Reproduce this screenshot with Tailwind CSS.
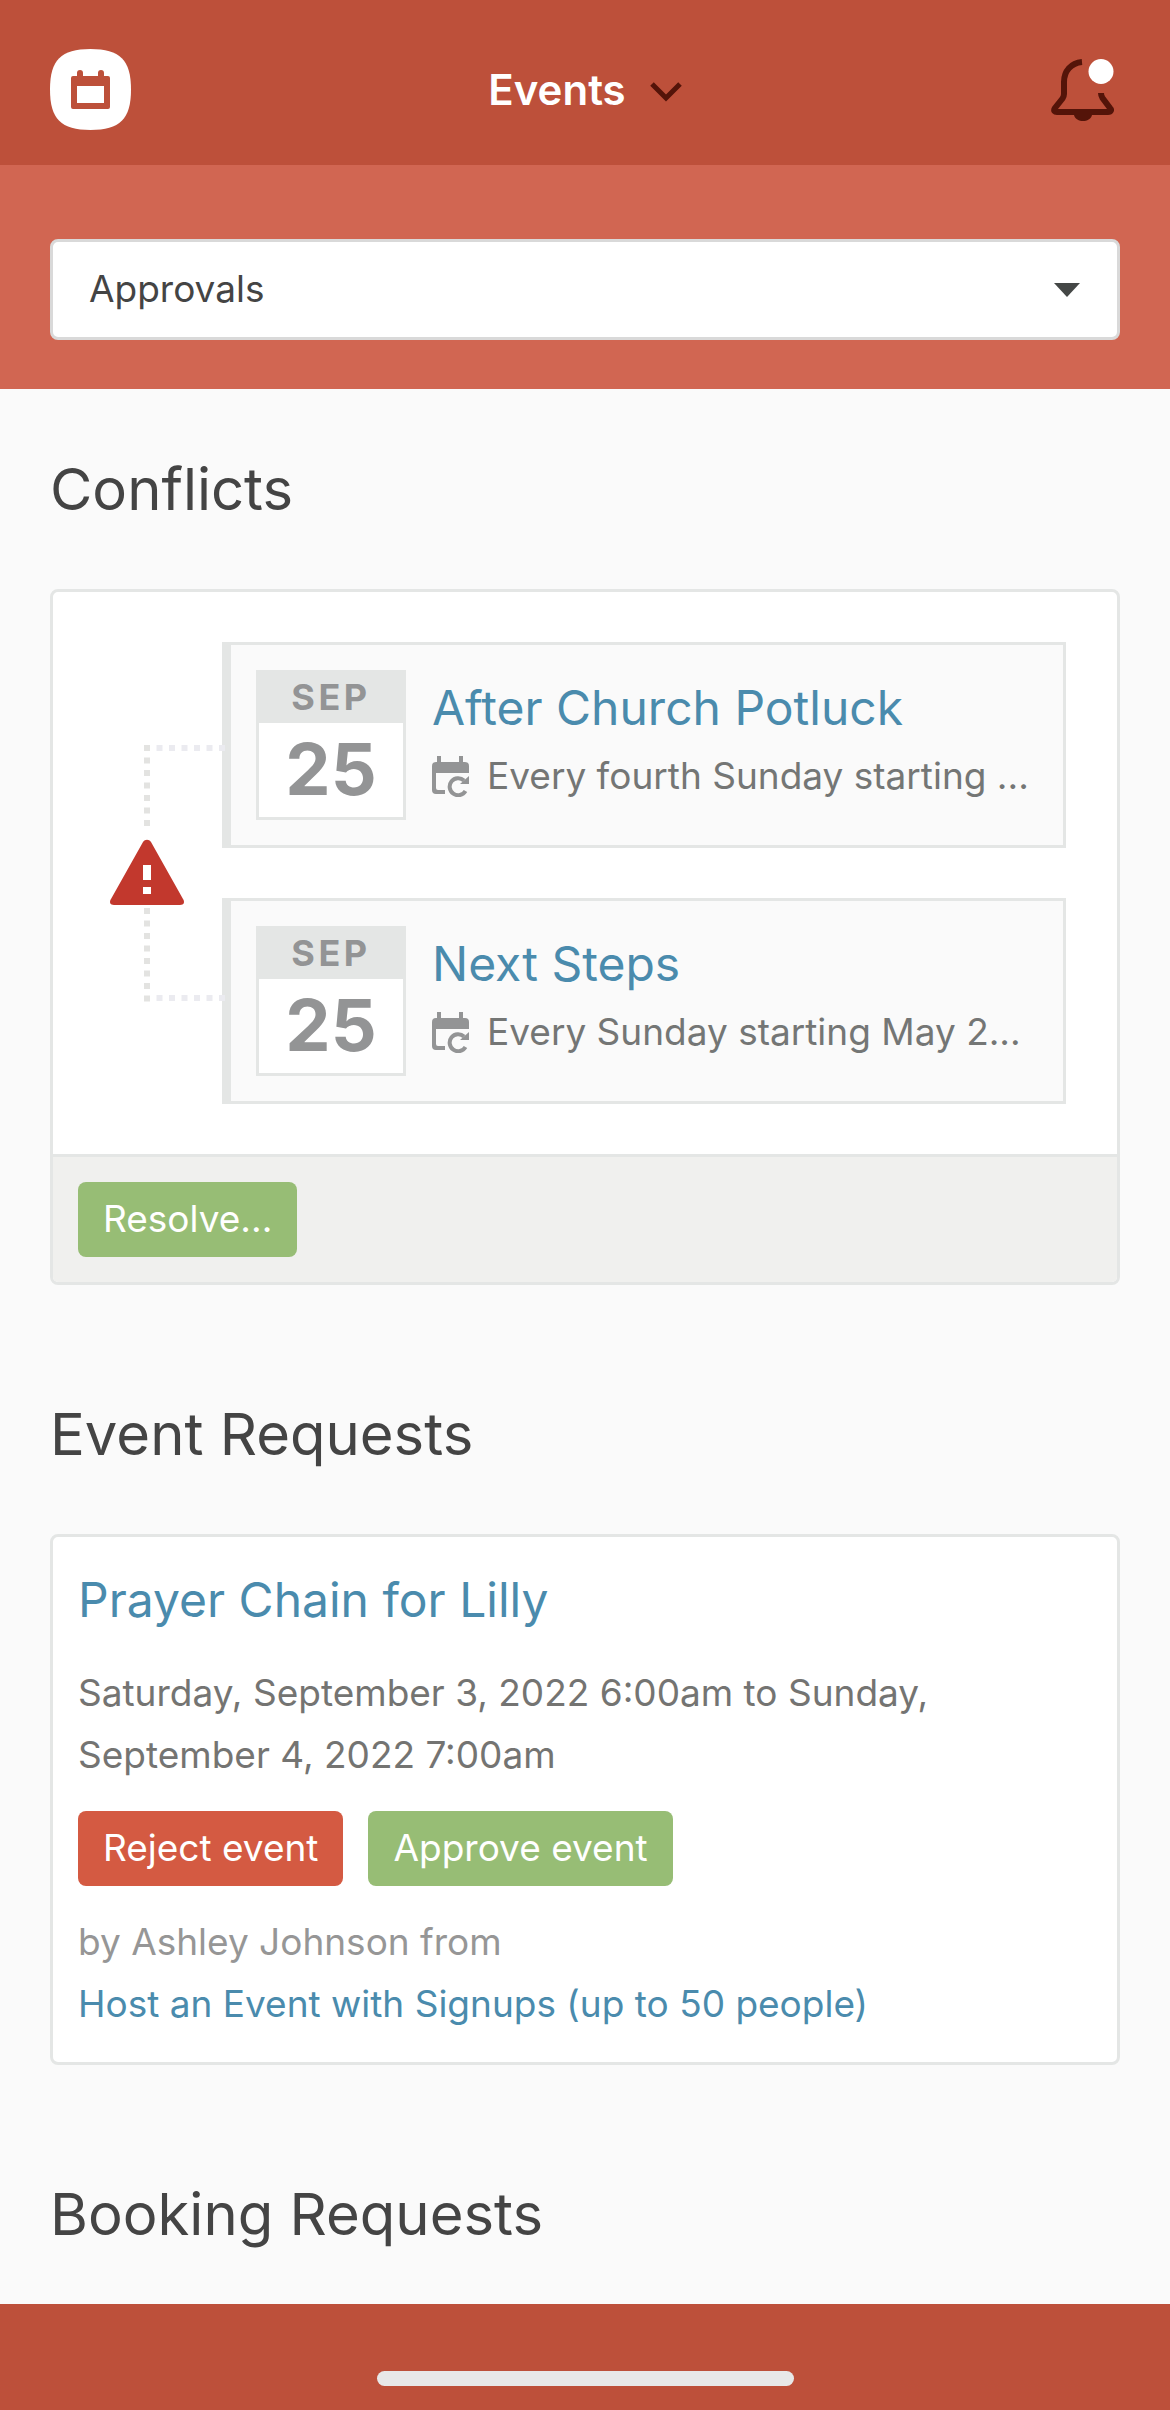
<!DOCTYPE html>
<html lang="en">
<head>
    <meta charset="UTF-8">
    <meta name="viewport" content="width=device-width, initial-scale=1.0">
    <title>Events - Approvals</title>
    <script src="https://cdn.jsdelivr.net/npm/@tailwindcss/browser@4"></script>
</head>
<body class="flex min-h-screen flex-col bg-[#fafafa] font-['Inter','Liberation_Sans',sans-serif] text-[37px] text-[#444]">
    <header class="grid h-[165px] grid-cols-[1fr_auto_1fr] items-center bg-[#bd503a] px-[50px] pt-[14px]">
        <a href="#" aria-label="Home" class="justify-self-start">
            <svg class="size-[81px]" viewBox="0 0 81 81">
                <path fill="#fff" d="M40.500 0C70 0 81 11 81 40.500S70 81 40.500 81 0 70 0 40.500 11 0 40.500 0z"/>
                <path fill="#bd503a" fill-rule="evenodd" d="M27 24a3 3 0 0 1 6 0v3h15v-3a3 3 0 0 1 6 0v3h4a2 2 0 0 1 2 2v29a2 2 0 0 1-2 2H23a2 2 0 0 1-2-2V29a2 2 0 0 1 2-2h4zM27 37v17h27V37z"/>
            </svg>
        </a>
        <button class="flex items-center gap-6 text-[42px] leading-none font-semibold text-white">
            Events
            <svg class="mt-1 h-5 w-8" viewBox="0 0 32 20" fill="none" stroke="#541409" stroke-width="5">
                <path d="M2 2l14 14L30 2"/>
            </svg>
        </button>
        <button aria-label="Notifications" class="justify-self-end pr-[6px]">
            <svg class="h-[62px] w-[63px]" viewBox="0 0 63 62">
                <path fill="none" stroke="#541409" stroke-width="6" d="M31 3C20 4 13 12 13 23v12c0 2-.500 3-1.500 4.500L4 49c-2 3 0 4 2 4h51c3 0 4-2 2-4l-7.500-10c-1-1.500-1.500-3-1.500-5"/>
                <path fill="#541409" d="M23 56h18c-1 4-5 6-9 6s-8-2-9-6z"/>
                <circle cx="50" cy="12.500" r="12.500" fill="#fff"/>
            </svg>
        </button>
    </header>

    <div class="bg-[#d16652] px-[50px] pt-[74px] pb-[49px]">
        <div class="relative">
            <select aria-label="View" class="block h-[101px] w-full appearance-none rounded-lg border-3 border-[#d9d9d9] bg-white px-9 pb-[2px] text-[#444]">
                <option>Approvals</option>
            </select>
            <svg class="pointer-events-none absolute top-11 right-10 h-[14px] w-[26px]" viewBox="0 0 26 14" fill="#444746">
                <path d="M0 0h26L13 14z"/>
            </svg>
        </div>
    </div>

    <main class="flex flex-1 flex-col gap-[113px] px-[50px] pt-16">
        <section>
            <h2 class="mb-16 text-[58px] leading-[72px]">Conflicts</h2>
            <div class="overflow-hidden rounded-lg border-3 border-[#e4e6e5] bg-white">
                <div class="flex items-center py-[50px] pr-[51px] pl-[57px]">
                    <!-- Connector between the conflicting events -->
                    <svg class="relative z-10 h-[257px] w-28 shrink-0 overflow-visible" viewBox="0 0 112 257">
                        <g fill="none" stroke-width="6">
                            <path stroke="#e3e3e1" stroke-dasharray="6 6.500" d="M37 0v82M37 163v94"/>
                            <path stroke="#ebebf0" stroke-dasharray="6 6.500" d="M46.500 3H116M46.500 253H116"/>
                        </g>
                        <path fill="#c2382d" d="M33 97c2-3 6-3 8 0l32 57c2 3 1 6-3 6H4c-4 0-5-3-3-6z"/>
                        <path fill="#fff" d="M33 120h8v15h-8zM33 142h8v7h-8z"/>
                    </svg>
                    <div class="flex min-w-0 flex-1 flex-col gap-[50px]">
                        <article class="flex gap-[26px] border-3 border-l-9 border-[#e4e6e5] bg-[#fafafa] p-[25px]">
                            <div class="size-[150px] shrink-0 border-3 border-[#e4e6e5] bg-white text-center font-bold text-[#939495]">
                                <div class="bg-[#e4e6e5] pb-[2px] text-4xl leading-[48px] tracking-widest">SEP</div>
                                <div class="text-7xl leading-[92px]">25</div>
                            </div>
                            <div class="min-w-0 flex-1">
                                <h3 class="truncate text-5xl leading-[76px]"><a href="#" class="text-[#4a8bad]">After Church Potluck</a></h3>
                                <div class="flex items-center gap-[18px] leading-[60px] text-[#747675]">
                                    <svg class="h-[41px] w-[37px] shrink-0" viewBox="0 0 37 41">
                                        <path fill="#939495" d="M5 0h4v6h18V0h4v6h2a4 4 0 0 1 4 4v7H4v15a2 2 0 0 0 2 2h7v4H4a4 4 0 0 1-4-4V10a4 4 0 0 1 4-4h1z"/>
                                        <path fill="none" stroke="#939495" stroke-width="4" d="M33.500 35A8.500 8.500 0 1 1 32 24.500"/>
                                        <path fill="#939495" d="M37 20v8h-9z"/>
                                    </svg>
                                    <p class="truncate">Every fourth Sunday starting ...</p>
                                </div>
                            </div>
                        </article>
                        <article class="flex gap-[26px] border-3 border-l-9 border-[#e4e6e5] bg-[#fafafa] p-[25px]">
                            <div class="size-[150px] shrink-0 border-3 border-[#e4e6e5] bg-white text-center font-bold text-[#939495]">
                                <div class="bg-[#e4e6e5] pb-[2px] text-4xl leading-[48px] tracking-widest">SEP</div>
                                <div class="text-7xl leading-[92px]">25</div>
                            </div>
                            <div class="min-w-0 flex-1">
                                <h3 class="truncate text-5xl leading-[76px]"><a href="#" class="text-[#4a8bad]">Next Steps</a></h3>
                                <div class="flex items-center gap-[18px] leading-[60px] text-[#747675]">
                                    <svg class="h-[41px] w-[37px] shrink-0" viewBox="0 0 37 41">
                                        <path fill="#939495" d="M5 0h4v6h18V0h4v6h2a4 4 0 0 1 4 4v7H4v15a2 2 0 0 0 2 2h7v4H4a4 4 0 0 1-4-4V10a4 4 0 0 1 4-4h1z"/>
                                        <path fill="none" stroke="#939495" stroke-width="4" d="M33.500 35A8.500 8.500 0 1 1 32 24.500"/>
                                        <path fill="#939495" d="M37 20v8h-9z"/>
                                    </svg>
                                    <p class="truncate">Every Sunday starting May 2...</p>
                                </div>
                            </div>
                        </article>
                    </div>
                </div>
                <div class="border-t-3 border-[#e4e6e5] bg-[#f0f0ee] p-[25px]">
                    <button class="block h-[75px] rounded-lg bg-[#97bd75] px-[25px] pb-[2px] text-white">Resolve...</button>
                </div>
            </div>
        </section>

        <section>
            <h2 class="mb-16 text-[58px] leading-[72px]">Event Requests</h2>
            <div class="rounded-lg border-3 border-[#e4e6e5] bg-white px-[25px] pt-[25px] pb-[27px]">
                <h3 class="text-5xl leading-[76px]"><a href="#" class="text-[#4a8bad]">Prayer Chain for Lilly</a></h3>
                <p class="mt-6 leading-[62px] text-[#747472]">Saturday, September 3, 2022 6:00am to Sunday,<br>September 4, 2022 7:00am</p>
                <div class="mt-[25px] flex gap-[25px]">
                    <button class="h-[75px] rounded-lg bg-[#d45a42] px-[25px] pb-[2px] text-white">Reject event</button>
                    <button class="h-[75px] rounded-lg bg-[#97bd75] px-[25px] pb-[2px] text-white">Approve event</button>
                </div>
                <p class="mt-[25px] leading-[62px] text-[#969696]">by Ashley Johnson from<br><a href="#" class="text-[#4a8bad]">Host an Event with Signups (up to 50 people)</a></p>
            </div>
        </section>

        <section>
            <h2 class="text-[58px] leading-[72px]">Booking Requests</h2>
        </section>
    </main>

    <footer class="flex h-[106px] items-end justify-center bg-[#bd503a] pb-6">
        <div class="h-[15px] w-[417px] rounded-full bg-[#e8e8e8]"></div>
    </footer>
</body>
</html>
